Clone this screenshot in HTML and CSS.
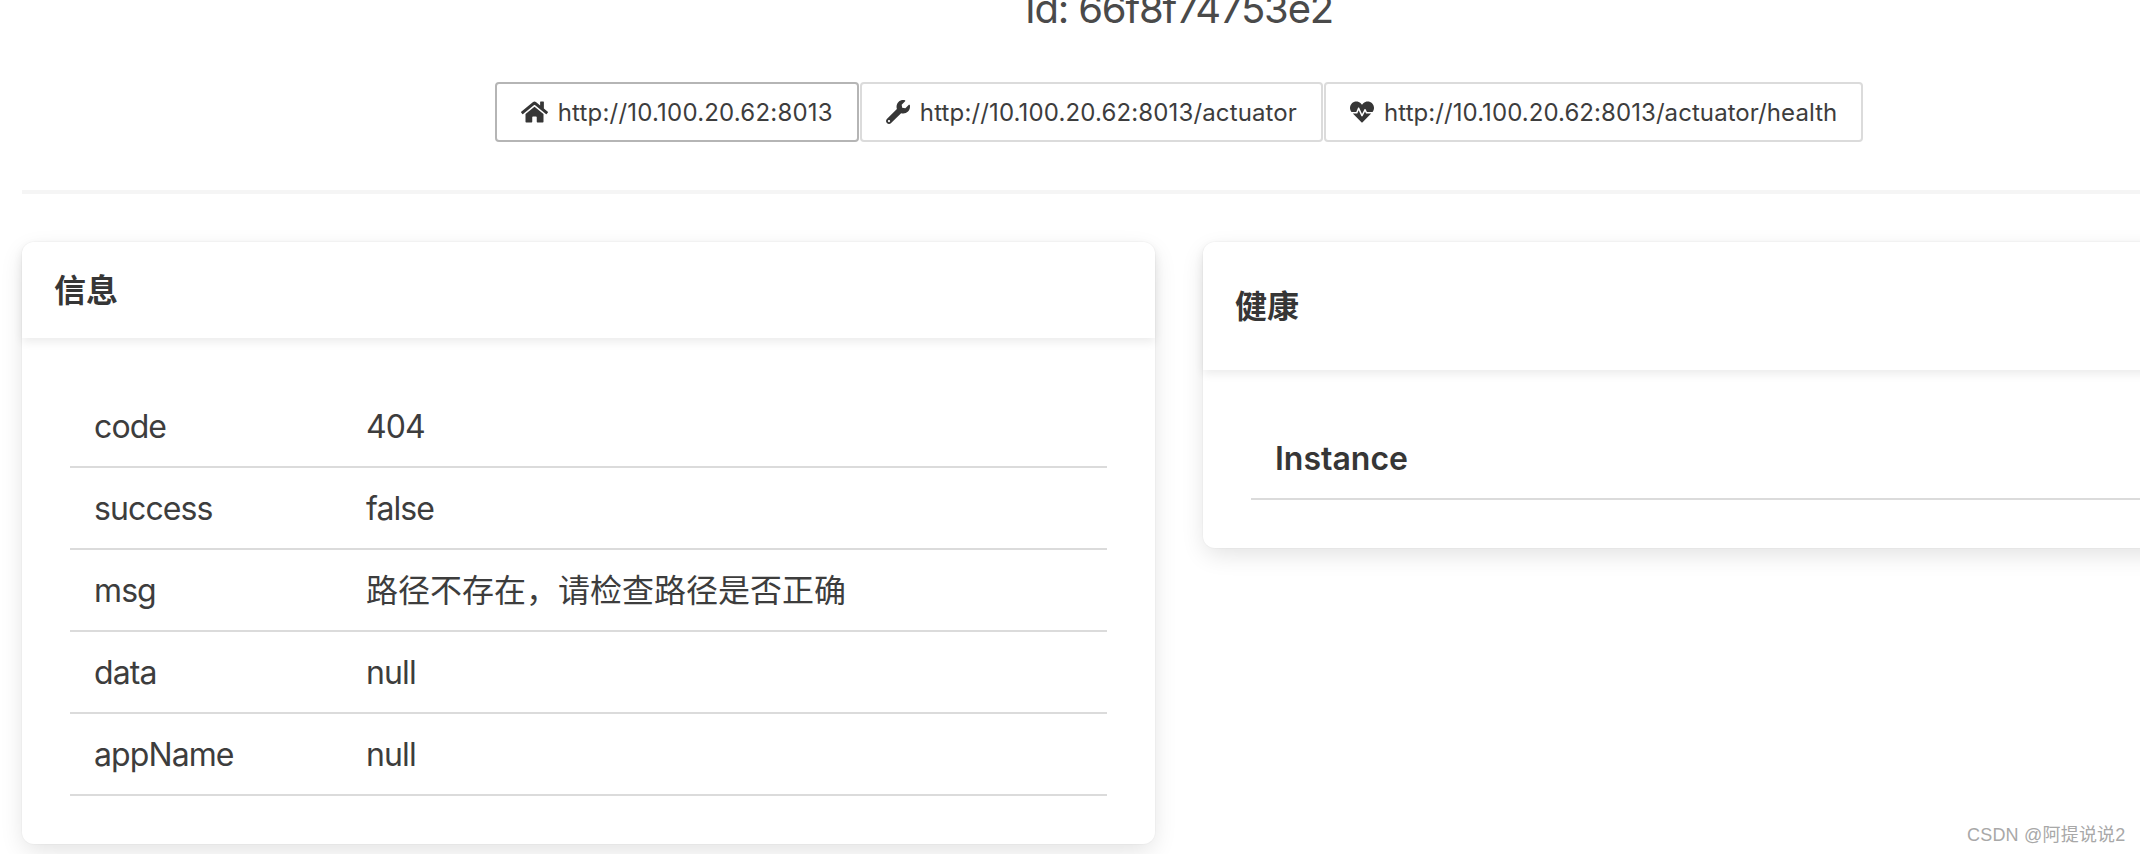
FILE: index.html
```html
<!DOCTYPE html>
<html lang="zh">
<head>
<meta charset="utf-8">
<title>Instance</title>
<link rel="stylesheet" href="styles.css">
</head>
<body>
<div class="page">
  <section class="head">
    <h1 class="subtitle">Id: 66f8f74753e2</h1>
    <div class="links">
      <a class="btn btn-focus">
        <svg class="ico" viewBox="0 0 576 512" width="27" height="24"><path d="M280.37 148.26L96 300.11V464a16 16 0 0 0 16 16l112.06-.29a16 16 0 0 0 15.92-16V368a16 16 0 0 1 16-16h64a16 16 0 0 1 16 16v95.64a16 16 0 0 0 16 16.05L464 480a16 16 0 0 0 16-16V300L295.67 148.26a12.19 12.19 0 0 0-15.3 0zM571.6 251.47L488 182.56V44.05a12 12 0 0 0-12-12h-56a12 12 0 0 0-12 12v72.61L318.47 43a48 48 0 0 0-61 0L4.34 251.47a12 12 0 0 0-1.6 16.9l25.5 31A12 12 0 0 0 45.15 301l235.22-193.74a12.19 12.19 0 0 1 15.3 0L530.9 301a12 12 0 0 0 16.9-1.6l25.5-31a12 12 0 0 0-1.7-16.93z"/></svg>
        <span>http://10.100.20.62:8013</span>
      </a>
      <a class="btn btn-mid">
        <svg class="ico" viewBox="0 0 512 512" width="24" height="24"><path d="M507.73 109.1c-2.24-9.03-13.54-12.09-20.12-5.51l-74.36 74.36-67.88-11.31-11.31-67.88 74.36-74.36c6.62-6.62 3.43-17.9-5.66-20.16-47.38-11.74-99.55.91-136.58 37.93-39.64 39.64-50.55 97.1-34.05 147.2L18.74 402.76c-24.99 24.99-24.99 65.51 0 90.5 24.99 24.99 65.51 24.99 90.5 0l213.21-213.21c50.12 16.71 107.47 5.68 147.37-34.22 37.07-37.07 49.7-89.32 37.91-136.73zM64 472c-13.25 0-24-10.75-24-24 0-13.26 10.75-24 24-24s24 10.74 24 24c0 13.25-10.75 24-24 24z"/></svg>
        <span>http://10.100.20.62:8013/actuator</span>
      </a>
      <a class="btn btn-last">
        <svg class="ico" viewBox="0 0 512 512" width="24" height="24"><path d="M320.2 243.8l-49.7 99.4c-6 12.1-23.4 11.7-28.9-.6l-56.9-126.3-30 71.7H60.6l182.5 186.5c7.1 7.3 18.6 7.3 25.7 0L451.4 288H342.3l-22.1-44.2zM473.7 73.9l-2.4-2.5c-51.5-52.6-135.8-52.6-187.4 0L256 100l-27.9-28.5c-51.5-52.7-135.9-52.7-187.4 0l-2.4 2.4C-10.4 123.7-12.5 203 31 256h102.4l35.9-86.2c5.4-12.9 23.6-13.2 29.4-.4l58.2 129.3 49-97.9c5.9-11.8 22.7-11.8 28.6 0l27.6 55.2H481c43.5-53 41.4-132.3-7.3-182.1z"/></svg>
        <span>http://10.100.20.62:8013/actuator/health</span>
      </a>
    </div>
  </section>
  <hr class="rule">
  <main class="columns">
    <article class="card">
      <header class="card-head">信息</header>
      <div class="card-body">
        <table class="info">
          <tbody>
            <tr><td class="key">code</td><td>404</td></tr>
            <tr><td class="key">success</td><td>false</td></tr>
            <tr><td class="key">msg</td><td class="cjk">路径不存在，请检查路径是否正确</td></tr>
            <tr><td class="key">data</td><td>null</td></tr>
            <tr><td class="key">appName</td><td>null</td></tr>
          </tbody>
        </table>
      </div>
    </article>
    <article class="card">
      <header class="card-head card-head-tall">健康</header>
      <div class="card-body">
        <table class="info">
          <tbody>
            <tr><th class="inst">Instance</th></tr>
          </tbody>
        </table>
      </div>
    </article>
  </main>
</div>
<div class="mark">CSDN @阿提说说2</div>
</body>
</html>
```
FILE: styles.css
```css
html, body {
  margin: 0;
  padding: 0;
  background: #fff;
  overflow: hidden;
  height: 854px;
}
body {
  font-family: Inter, "Noto Sans CJK SC", sans-serif;
  color: #363636;
}
.page {
  width: 2358px;
  box-sizing: border-box;
  padding: 0 22px;
}
.head {
  display: flex;
  flex-direction: column;
  align-items: center;
}
.subtitle {
  margin: -15px 0 49px;
  font-size: 40px;
  line-height: 48px;
  font-weight: 400;
  color: #4a4a4a;
  letter-spacing: -1.2px;
}
.links {
  display: flex;
  gap: 1px;
}
.btn {
  display: flex;
  align-items: center;
  gap: 10px;
  height: 60px;
  box-sizing: border-box;
  padding: 0 24px;
  border: 2px solid #dbdbdb;
  border-radius: 4px;
  font-size: 24px;
  letter-spacing: 0.21px;
  color: #3d3d3d;
  background: #fff;
}
.btn-mid {
  letter-spacing: 0.14px;
}
.btn-last {
  letter-spacing: 0.07px;
}
.btn-focus {
  border-color: #b5b5b5;
}
.ico {
  fill: #363636;
  display: block;
  flex: none;
}
.rule {
  border: 0;
  height: 4px;
  margin: 48px 0;
  background: #f5f5f5;
}
.columns {
  display: grid;
  grid-template-columns: 1fr 1fr;
  gap: 48px;
  align-items: start;
}
.card {
  background: #fff;
  border-radius: 12px;
  box-shadow: 0 8px 24px -2px rgba(10, 10, 10, 0.12), 0 0 0 1px rgba(10, 10, 10, 0.02);
}
.card-head {
  height: 96px;
  box-sizing: border-box;
  padding: 0 32px 4px;
  display: flex;
  align-items: center;
  font-size: 32px;
  font-weight: 700;
  color: #363636;
  border-radius: 12px 12px 0 0;
  box-shadow: 0 4px 10px rgba(10, 10, 10, 0.08);
}
.card-head-tall {
  height: 128px;
}
.card-body {
  padding: 48px;
}
.info {
  width: 100%;
  border-collapse: separate;
  border-spacing: 0;
  table-layout: fixed;
  font-size: 32px;
  line-height: 48px;
  letter-spacing: -0.9px;
  color: #3d3d3d;
}
.info td, .info th {
  height: 82px;
  box-sizing: border-box;
  padding: 2px 24px 0;
  border-bottom: 2px solid #dbdbdb;
  text-align: left;
  vertical-align: middle;
}
.info .cjk {
  letter-spacing: 0;
}
.key {
  width: 272px;
}
.info .inst {
  font-weight: 600;
  color: #363636;
  letter-spacing: 0;
}
.mark {
  position: absolute;
  left: 1967px;
  top: 824px;
  font-family: "Liberation Sans", "Noto Sans CJK SC", sans-serif;
  font-size: 18px;
  line-height: 22px;
  letter-spacing: 0.2px;
  color: #a8a8a8;
  white-space: nowrap;
}
```
